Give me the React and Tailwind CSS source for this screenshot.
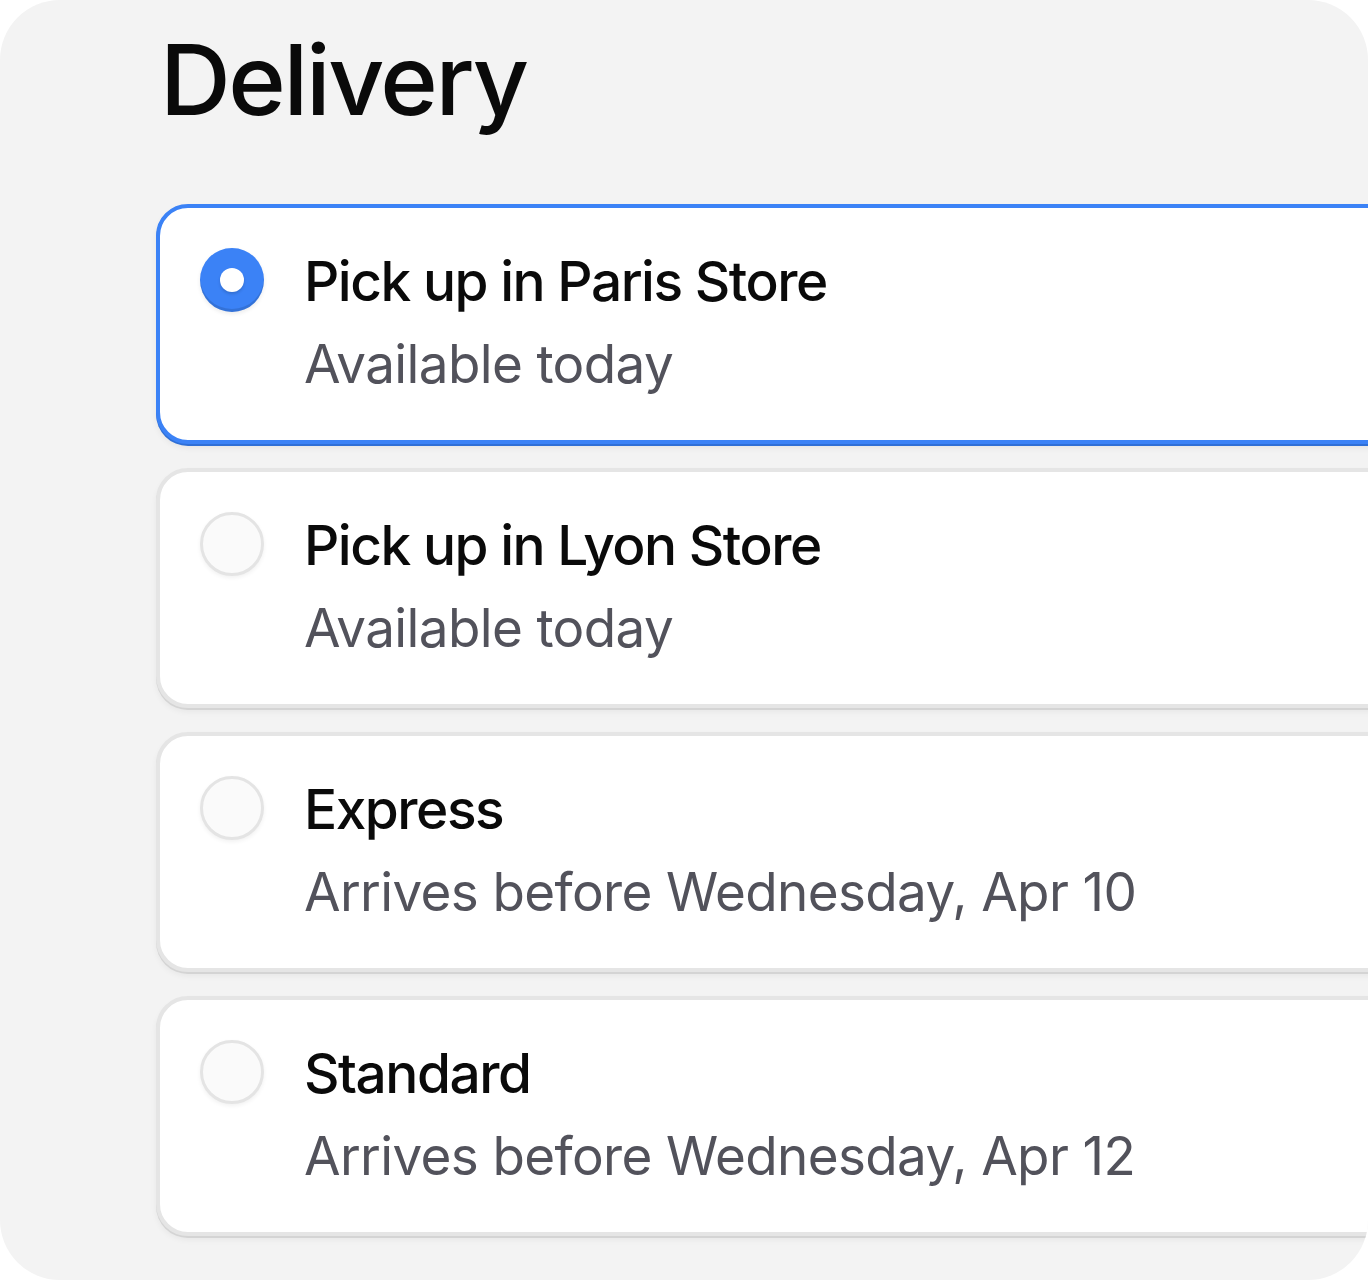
import React from 'react';

const options = [
  { title: 'Pick up in Paris Store', note: 'Available today', selected: true },
  { title: 'Pick up in Lyon Store', note: 'Available today' },
  { title: 'Express', note: 'Arrives before Wednesday, Apr 10' },
  { title: 'Standard', note: 'Arrives before Wednesday, Apr 12' },
];

function Radio({ on }) {
  if (on) {
    return (
      <span className="flex h-[64px] w-[64px] shrink-0 items-center justify-center rounded-full bg-[#3b82f6] shadow-[inset_0_-3px_0_rgba(0,0,0,0.12),0_2px_4px_rgba(0,0,0,0.08)]">
        <span className="h-[24px] w-[24px] rounded-full bg-white shadow-[0_2px_3px_rgba(0,0,0,0.15)]" />
      </span>
    );
  }
  return (
    <span className="h-[64px] w-[64px] shrink-0 rounded-full border-[3px] border-[#e4e4e4] bg-[#fafafa] shadow-[0_2px_4px_rgba(0,0,0,0.06)]" />
  );
}

export default function App() {
  return (
    <div className="bg-white">
      <div className="h-[1280px] w-[1368px] overflow-hidden rounded-[60px] bg-[#f3f3f3] pl-[156px] pt-[31px] font-['Inter',sans-serif]">
        <h1 className="pl-[4px] text-[98px] font-medium leading-[98px] tracking-[-0.024em] text-[#0a0a0a]">Delivery</h1>

        <div className="mt-[75px] flex w-[1400px] flex-col gap-[24px]">
          {options.map((o) => (
            <div
              key={o.title}
              className={`flex h-[240px] gap-[40px] rounded-[32px] border-[4px] bg-white pl-[40px] pt-[40px] ${
                o.selected
                  ? 'border-[#3b82f6] shadow-[0_2px_0_#2f6fd6,0_4px_6px_rgba(0,0,0,0.06)]'
                  : 'border-[#e5e5e5] shadow-[0_2px_0_#d4d4d4,0_4px_6px_rgba(0,0,0,0.05)]'
              }`}
            >
              <Radio on={o.selected} />
              <div className="flex flex-col">
                <span className="text-[55px] font-medium leading-[66px] tracking-[-0.027em] text-[#0a0a0a]">{o.title}</span>
                <span className="mt-[18px] text-[53px] leading-[64px] tracking-[-0.012em] text-[#52525b]">{o.note}</span>
              </div>
            </div>
          ))}
        </div>
      </div>
    </div>
  );
}
